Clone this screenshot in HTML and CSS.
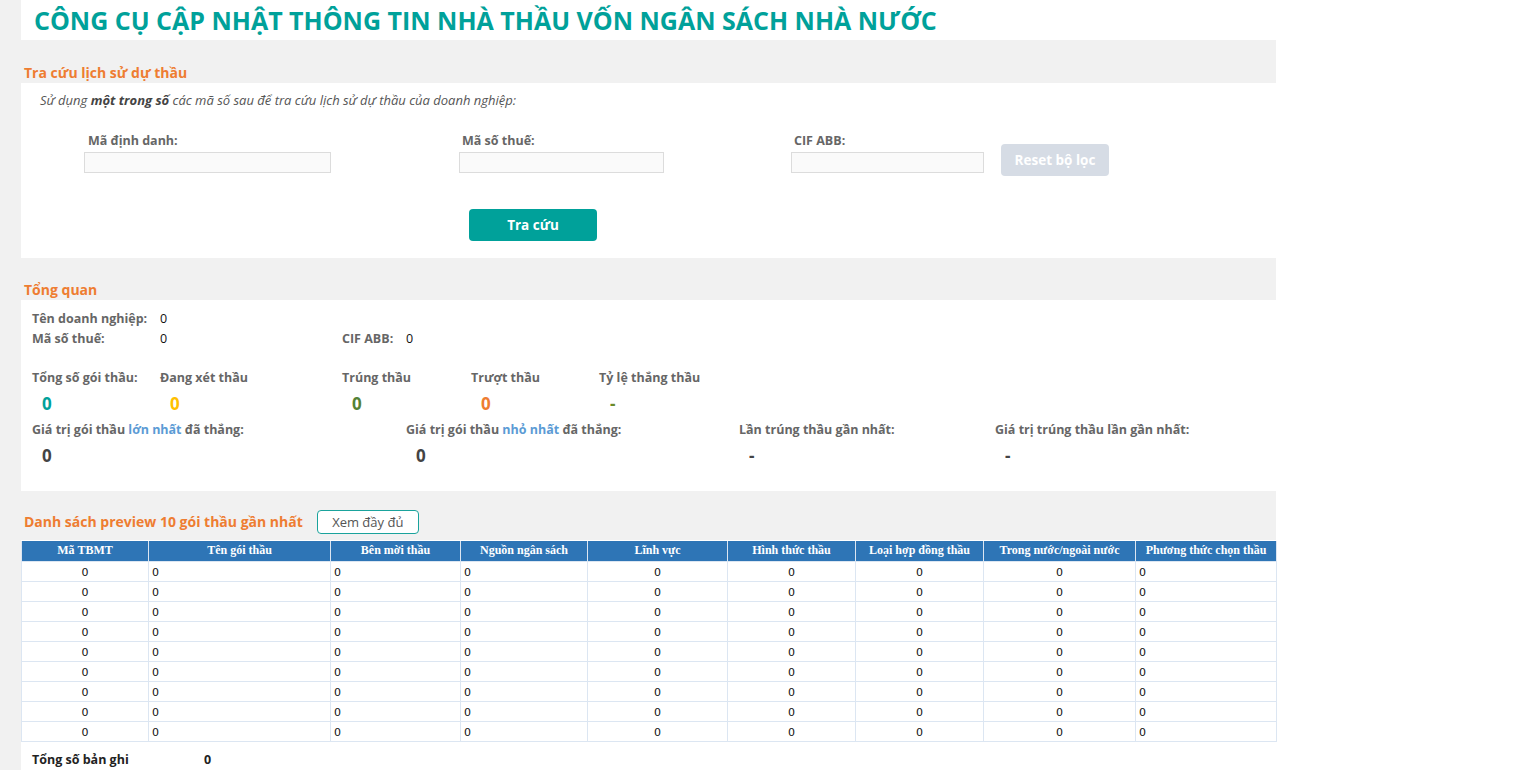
FILE: index.html
```html
<!DOCTYPE html>
<html lang="vi">
<head>
<meta charset="utf-8">
<title>Công cụ cập nhật thông tin nhà thầu</title>
<link rel="stylesheet" href="styles.css">
</head>
<body>
<div class="layout">
  <div class="strip"></div>
  <main class="main">
    <h1 class="title">CÔNG CỤ CẬP NHẬT THÔNG TIN NHÀ THẦU VỐN NGÂN SÁCH NHÀ NƯỚC</h1>

    <div class="band band-search"><h2 class="band-title">Tra cứu lịch sử dự thầu</h2></div>
    <section class="search-panel">
      <p class="intro">Sử dụng <b>một trong số</b> các mã số sau để tra cứu lịch sử dự thầu của doanh nghiệp:</p>
      <div class="fields">
        <div class="field f1"><label class="field-label lbl-indent">Mã định danh:</label><input class="input" type="text"></div>
        <div class="field f2"><label class="field-label">Mã số thuế:</label><input class="input" type="text"></div>
        <div class="field f3"><label class="field-label">CIF ABB:</label><input class="input" type="text"></div>
        <button class="btn-reset">Reset bộ lọc</button>
      </div>
      <button class="btn-search">Tra cứu</button>
    </section>

    <div class="band band-overview"><h2 class="band-title">Tổng quan</h2></div>
    <section class="overview">
      <div class="info-row"><span class="info-label">Tên doanh nghiệp:</span><span class="info-val">0</span></div>
      <div class="info-row"><span class="info-label">Mã số thuế:</span><span class="info-val w-mst">0</span><span class="info-label w-cif">CIF ABB:</span><span class="info-val">0</span></div>

      <div class="stats stats-a">
        <div class="stat"><div class="stat-label">Tổng số gói thầu:</div><div class="stat-val c-teal">0</div></div>
        <div class="stat"><div class="stat-label">Đang xét thầu</div><div class="stat-val c-yellow">0</div></div>
        <div class="stat"><div class="stat-label">Trúng thầu</div><div class="stat-val c-green">0</div></div>
        <div class="stat"><div class="stat-label">Trượt thầu</div><div class="stat-val c-orange">0</div></div>
        <div class="stat"><div class="stat-label">Tỷ lệ thắng thầu</div><div class="stat-val c-olive">-</div></div>
      </div>
      <div class="stats stats-b">
        <div class="stat"><div class="stat-label">Giá trị gói thầu <span class="hl">lớn nhất</span> đã thắng:</div><div class="stat-val c-dark">0</div></div>
        <div class="stat"><div class="stat-label">Giá trị gói thầu <span class="hl">nhỏ nhất</span> đã thắng:</div><div class="stat-val c-dark">0</div></div>
        <div class="stat"><div class="stat-label">Lần trúng thầu gần nhất:</div><div class="stat-val c-dark">-</div></div>
        <div class="stat"><div class="stat-label">Giá trị trúng thầu lần gần nhất:</div><div class="stat-val c-dark">-</div></div>
      </div>
    </section>

    <div class="band band-list"><h2 class="band-title">Danh sách preview 10 gói thầu gần nhất</h2><button class="btn-more">Xem đầy đủ</button></div>
    <table class="grid">
      <colgroup>
        <col style="width:127px"><col style="width:182px"><col style="width:130px"><col style="width:127px"><col style="width:140px"><col style="width:128px"><col style="width:128px"><col style="width:152px"><col style="width:141px">
      </colgroup>
      <thead>
        <tr><th>Mã TBMT</th><th>Tên gói thầu</th><th>Bên mời thầu</th><th>Nguồn ngân sách</th><th>Lĩnh vực</th><th>Hình thức thầu</th><th>Loại hợp đồng thầu</th><th>Trong nước/ngoài nước</th><th>Phương thức chọn thầu</th></tr>
      </thead>
      <tbody>
        <tr><td class="c">0</td><td>0</td><td>0</td><td>0</td><td class="c">0</td><td class="c">0</td><td class="c">0</td><td class="c">0</td><td>0</td></tr>
        <tr><td class="c">0</td><td>0</td><td>0</td><td>0</td><td class="c">0</td><td class="c">0</td><td class="c">0</td><td class="c">0</td><td>0</td></tr>
        <tr><td class="c">0</td><td>0</td><td>0</td><td>0</td><td class="c">0</td><td class="c">0</td><td class="c">0</td><td class="c">0</td><td>0</td></tr>
        <tr><td class="c">0</td><td>0</td><td>0</td><td>0</td><td class="c">0</td><td class="c">0</td><td class="c">0</td><td class="c">0</td><td>0</td></tr>
        <tr><td class="c">0</td><td>0</td><td>0</td><td>0</td><td class="c">0</td><td class="c">0</td><td class="c">0</td><td class="c">0</td><td>0</td></tr>
        <tr><td class="c">0</td><td>0</td><td>0</td><td>0</td><td class="c">0</td><td class="c">0</td><td class="c">0</td><td class="c">0</td><td>0</td></tr>
        <tr><td class="c">0</td><td>0</td><td>0</td><td>0</td><td class="c">0</td><td class="c">0</td><td class="c">0</td><td class="c">0</td><td>0</td></tr>
        <tr><td class="c">0</td><td>0</td><td>0</td><td>0</td><td class="c">0</td><td class="c">0</td><td class="c">0</td><td class="c">0</td><td>0</td></tr>
        <tr><td class="c">0</td><td>0</td><td>0</td><td>0</td><td class="c">0</td><td class="c">0</td><td class="c">0</td><td class="c">0</td><td>0</td></tr>
      </tbody>
    </table>
    <div class="total"><span class="total-label">Tổng số bản ghi</span><span class="total-val">0</span></div>
  </main>
</div>
</body>
</html>
```

FILE: styles.css
```css
* { box-sizing: border-box; }
html, body { margin: 0; padding: 0; background: #fff; }
body { font-family: "Open Sans", "Noto Sans", sans-serif; font-size: 12.5px; color: #555; }

.layout { display: flex; min-height: 770px; }
.strip { width: 21px; flex: none; background: #f1f1f1; }
.main { width: 1255px; flex: none; }

.title {
  margin: 0; height: 40px; line-height: 40px; padding-left: 13px;
  font-size: 25px; font-weight: 700; color: #00a19a; letter-spacing: 0;
  white-space: nowrap;
}

.band { background: #f1f1f1; display: flex; align-items: flex-end; padding-left: 3px; }
.band-title { margin: 0; font-size: 14px; font-weight: 700; color: #ee7d31; line-height: 20px; }
.band-search { height: 43px; padding-bottom: 0; }
.band-overview { height: 42px; padding-bottom: 0; }
.band-list { height: 49px; align-items: center; padding-top: 17px; padding-bottom: 5px; }

.search-panel { height: 175px; padding-top: 9px; }
.intro { margin: 0 0 0 19px; font-style: italic; font-size: 13px; line-height: 16px; color: #555; }
.intro b { font-weight: 700; color: #444; }
.fields { display: flex; align-items: flex-end; margin-top: 25px; padding-left: 63px; }
.field { display: flex; flex-direction: column; }
.f1 { width: 247px; margin-right: 128px; }
.f2 { width: 205px; margin-right: 127px; }
.f3 { width: 193px; margin-right: 17px; }
.field-label { font-weight: 700; font-size: 12.5px; line-height: 16px; color: #666; margin-bottom: 3px; padding-left: 3px; }
.lbl-indent { padding-left: 4px; }
.input { height: 21px; border: 1px solid #dcdcdc; background: #fafafa; width: 100%; margin: 0; padding: 0 4px; font: inherit; }
.btn-reset {
  width: 108px; height: 32px; margin-bottom: -3px; border: none; border-radius: 4px;
  background: #d6dce5; color: #fff; font: 700 13.5px "Open Sans", sans-serif;
}
.btn-search {
  display: block; margin: 36px 0 0 448px; width: 128px; height: 32px; border: none; border-radius: 4px;
  background: #00a19a; color: #fff; font: 700 13.5px "Open Sans", sans-serif;
}

.overview { height: 191px; padding: 11px 0 0 11px; }
.info-row { display: flex; line-height: 16px; height: 20px; }
.info-label { width: 128px; font-weight: 700; color: #666; }
.info-val { color: #111; }
.w-mst { width: 182px; }
.w-cif { width: 64px; }
.stats { display: grid; }
.stats-a { grid-template-columns: 128px 182px 129px 128px 200px; margin-top: 19px; }
.stats-b { grid-template-columns: 374px 333px 256px 260px; margin-top: 7px; }
.stat-label { font-weight: 700; color: #666; line-height: 16px; white-space: nowrap; }
.stat-val { font-size: 17px; font-weight: 700; line-height: 22px; padding-left: 10px; margin-top: 7px; }
.stats-b .stat-val { margin-top: 7px; }
.hl { color: #5b9bd5; }
.c-teal { color: #00a19a; }
.c-yellow { color: #ffc000; }
.c-green { color: #548235; }
.c-orange { color: #ee7d31; }
.c-olive { color: #6a8a2a; padding-left: 11px; }
.c-dark { color: #444; }

.btn-more {
  margin-left: 14px; height: 24px; width: 102px; background: #fff; border: 1px solid #1aa39c;
  border-radius: 4px; color: #555; font: 400 13px "Open Sans", sans-serif; padding: 0;
}

.grid { width: 1255px; border-collapse: collapse; table-layout: fixed; margin-top: 1px; }
.grid th {
  background: #2e75b6; color: #fff; font: 700 12px "Liberation Serif", serif; height: 20px; padding: 0 2px;
  border-left: 1px solid #dce6f2; border-right: 1px solid #dce6f2; white-space: nowrap; overflow: hidden;
}
.grid td {
  height: 20px; padding: 3px 3px 0; border: 1px solid #dce6f2; font: 400 11px "DejaVu Sans", sans-serif;
  color: #111; text-align: left;
}
.grid td.c { text-align: center; }

.total { display: flex; padding: 10px 0 0 11px; line-height: 16px; }
.total-label { width: 172px; font-weight: 700; color: #222; }
.total-val { font-weight: 700; color: #222; }
```
